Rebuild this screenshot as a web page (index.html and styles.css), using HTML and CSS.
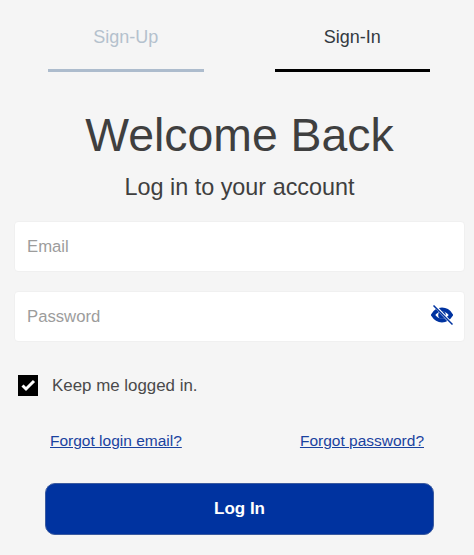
FILE: index.html
```html
<!DOCTYPE html>
<html>
<head>
    <title>Log In</title>
    <link rel="stylesheet" href="styles.css">
</head>
<body>

<div class="tabs">
    <a class="tab" href="#">Sign-Up</a>
    <a class="tab active" href="#">Sign-In</a>
</div>

<h1>Welcome Back</h1>
<p class="subtitle">Log in to your account</p>

<form class="login-form">
    <div class="field">
        <input type="text" placeholder="Email">
    </div>
    <div class="field">
        <input type="password" placeholder="Password">
        <svg class="eye" viewBox="0 0 22 20" width="22" height="20">
            <path d="M2 10C4.500 6 7.500 4.500 11 4.500s6.500 1.500 9 5.500c-2.500 4-5.500 5.500-9 5.500s-6.500-1.500-9-5.500z" fill="none" stroke="#0033a0" stroke-width="3.800"/>
            <circle cx="11" cy="10" r="3.800" fill="#0033a0"/>
            <path d="M3.500 0.500 20 18" stroke="#ffffff" stroke-width="2.800"/>
            <path d="M2.500 0.500 21.500 19.500" stroke="#0033a0" stroke-width="1.500"/>
        </svg>
    </div>

    <label class="keep">
        <span class="checkbox">
            <svg viewBox="0 0 20 21" width="20" height="21">
                <path d="M4.500 10.500 8 14 16 6" fill="none" stroke="#ffffff" stroke-width="3"/>
            </svg>
        </span>
        Keep me logged in.
    </label>

    <div class="links">
        <a href="#">Forgot login email?</a>
        <a href="#">Forgot password?</a>
    </div>

    <button type="button" class="login-button">Log In</button>
</form>

</body>
</html>
```

FILE: styles.css
```css
* {
    box-sizing: border-box;
}

body {
    font-family: "Liberation Sans", Arial, sans-serif;
    background-color: #f5f5f5;
    color: #3f3f3f;
    margin: 0;
    padding: 0 9px 0 14px;
    height: 555px;
    overflow: hidden;
}

.tabs {
    display: flex;
    justify-content: space-between;
    padding: 0 35px 0 34px;
}

.tab {
    width: 155.500px;
    height: 72px;
    padding-top: 27px;
    text-align: center;
    font-size: 18px;
    line-height: 21px;
    text-decoration: none;
    color: #b4c1cd;
    border-bottom: 3px solid #adbccd;
}

.tab.active {
    color: #333a40;
    border-bottom-color: #000000;
}

h1 {
    margin: 36px 0 0;
    text-align: center;
    font-size: 46.400px;
    line-height: 55px;
    font-weight: normal;
}

.subtitle {
    margin: 11px 0 0;
    text-align: center;
    font-size: 23.400px;
    line-height: 26px;
}

.login-form {
    margin-top: 21px;
}

.field {
    display: flex;
    align-items: center;
    height: 51px;
    margin-bottom: 19px;
    padding: 0 11px 3px 12px;
    background-color: #ffffff;
    border: 1px solid #f0f0f0;
    border-radius: 4px;
}

.field input {
    flex: 1;
    min-width: 0;
    border: none;
    outline: none;
    padding: 3px 0 0;
    font-family: inherit;
    font-size: 16.700px;
    background: transparent;
}

.field input::placeholder {
    color: #9c9c9c;
    opacity: 1;
}

.eye {
    display: block;
}

.keep {
    display: flex;
    align-items: center;
    gap: 14px;
    margin: 33px 0 0 4px;
    font-size: 16.900px;
    line-height: 20px;
    color: #4a4a4a;
}

.checkbox {
    width: 20px;
    height: 21px;
    display: block;
    background-color: #000000;
}

.checkbox svg {
    display: block;
}

.links {
    display: flex;
    justify-content: space-between;
    margin-top: 36px;
    padding: 0 41px 0 36px;
    font-size: 15.500px;
    line-height: 18px;
}

.links a {
    color: #1a429f;
}

.login-button {
    display: block;
    width: 389px;
    height: 52px;
    margin: 33px 0 0 31px;
    background-color: #0033a0;
    color: #ffffff;
    border: 1px solid #3a5a9f;
    border-radius: 10px;
    font-family: inherit;
    font-size: 17px;
    font-weight: bold;
}
```
